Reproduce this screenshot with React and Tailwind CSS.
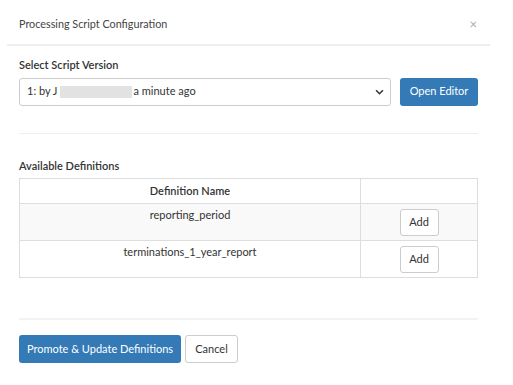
import React from "react";

const rows = ["reporting_period", "terminations_1_year_report"];

const App = () => {
  return (
    <div
      className="w-[513px] h-[385px] bg-white text-[#333] text-[11px] overflow-hidden"
      style={{ fontFamily: "Lato, 'Open Sans', sans-serif" }}
    >
      <div className="flex items-center justify-between pl-[19px] pr-[36px] pt-[4px] h-[44px]">
        <span className="text-[10.8px] text-[#444]">Processing Script Configuration</span>
        <span className="text-[13px] text-[#aaa] leading-none">×</span>
      </div>
      <div className="mx-[7px] w-[483px] h-[2px] bg-[#eeeeee]" />

      <div className="px-[19px] w-[497px]">
        <div className="pt-[11px] font-semibold text-[11px]">Select Script Version</div>
        <div className="flex items-center gap-[9px] mt-[4px]">
          <div className="flex items-center justify-between w-[372px] h-[28px] border border-[#ccc] rounded-[3px] pl-[7px] pr-[6px]">
            <span className="flex items-center">
              1: by J
              <span className="inline-block w-[72px] h-[12px] bg-[#e2e2e2] mx-[2px]" />
              a minute ago
            </span>
            <svg width="9" height="6" viewBox="0 0 10 7">
              <path d="M1 1.5 L5 5.5 L9 1.5" stroke="#333" strokeWidth="1.8" fill="none" />
            </svg>
          </div>
          <button className="w-[78px] h-[28px] bg-[#337ab7] text-white rounded-[3px] text-[11px]">
            Open Editor
          </button>
        </div>

        <div className="mt-[27px] h-[1px] w-[459px] bg-[#eeeeee]" />

        <div className="mt-[24px] font-semibold text-[11px]">Available Definitions</div>
        <table className="mt-[4px] w-[459px] border-collapse border border-[#ddd]">
          <thead>
            <tr className="h-[25px]">
              <th className="border border-[#ddd] font-semibold w-[341px] text-center">Definition Name</th>
              <th className="border border-[#ddd]" />
            </tr>
          </thead>
          <tbody>
            {rows.map((name, i) => (
              <tr key={name} className={i === 0 ? "bg-[#f9f9f9] h-[37px]" : "bg-white h-[37px]"}>
                <td className="border border-[#ddd] text-center align-top pt-[3px]">{name}</td>
                <td className="border border-[#ddd] text-center align-middle">
                  <button className="w-[39px] h-[27px] bg-white border border-[#ccc] rounded-[3px] text-[11px]">
                    Add
                  </button>
                </td>
              </tr>
            ))}
          </tbody>
        </table>

        <div className="mt-[40px] h-[2px] w-[459px] bg-[#f3f3f3]" />

        <div className="flex gap-[4px] mt-[15px]">
          <button className="w-[162px] h-[28px] bg-[#337ab7] text-white rounded-[3px] text-[11px]">
            Promote &amp; Update Definitions
          </button>
          <button className="w-[53px] h-[28px] bg-white border border-[#ccc] rounded-[3px] text-[11px]">
            Cancel
          </button>
        </div>
      </div>
    </div>
  );
};

export default App;
